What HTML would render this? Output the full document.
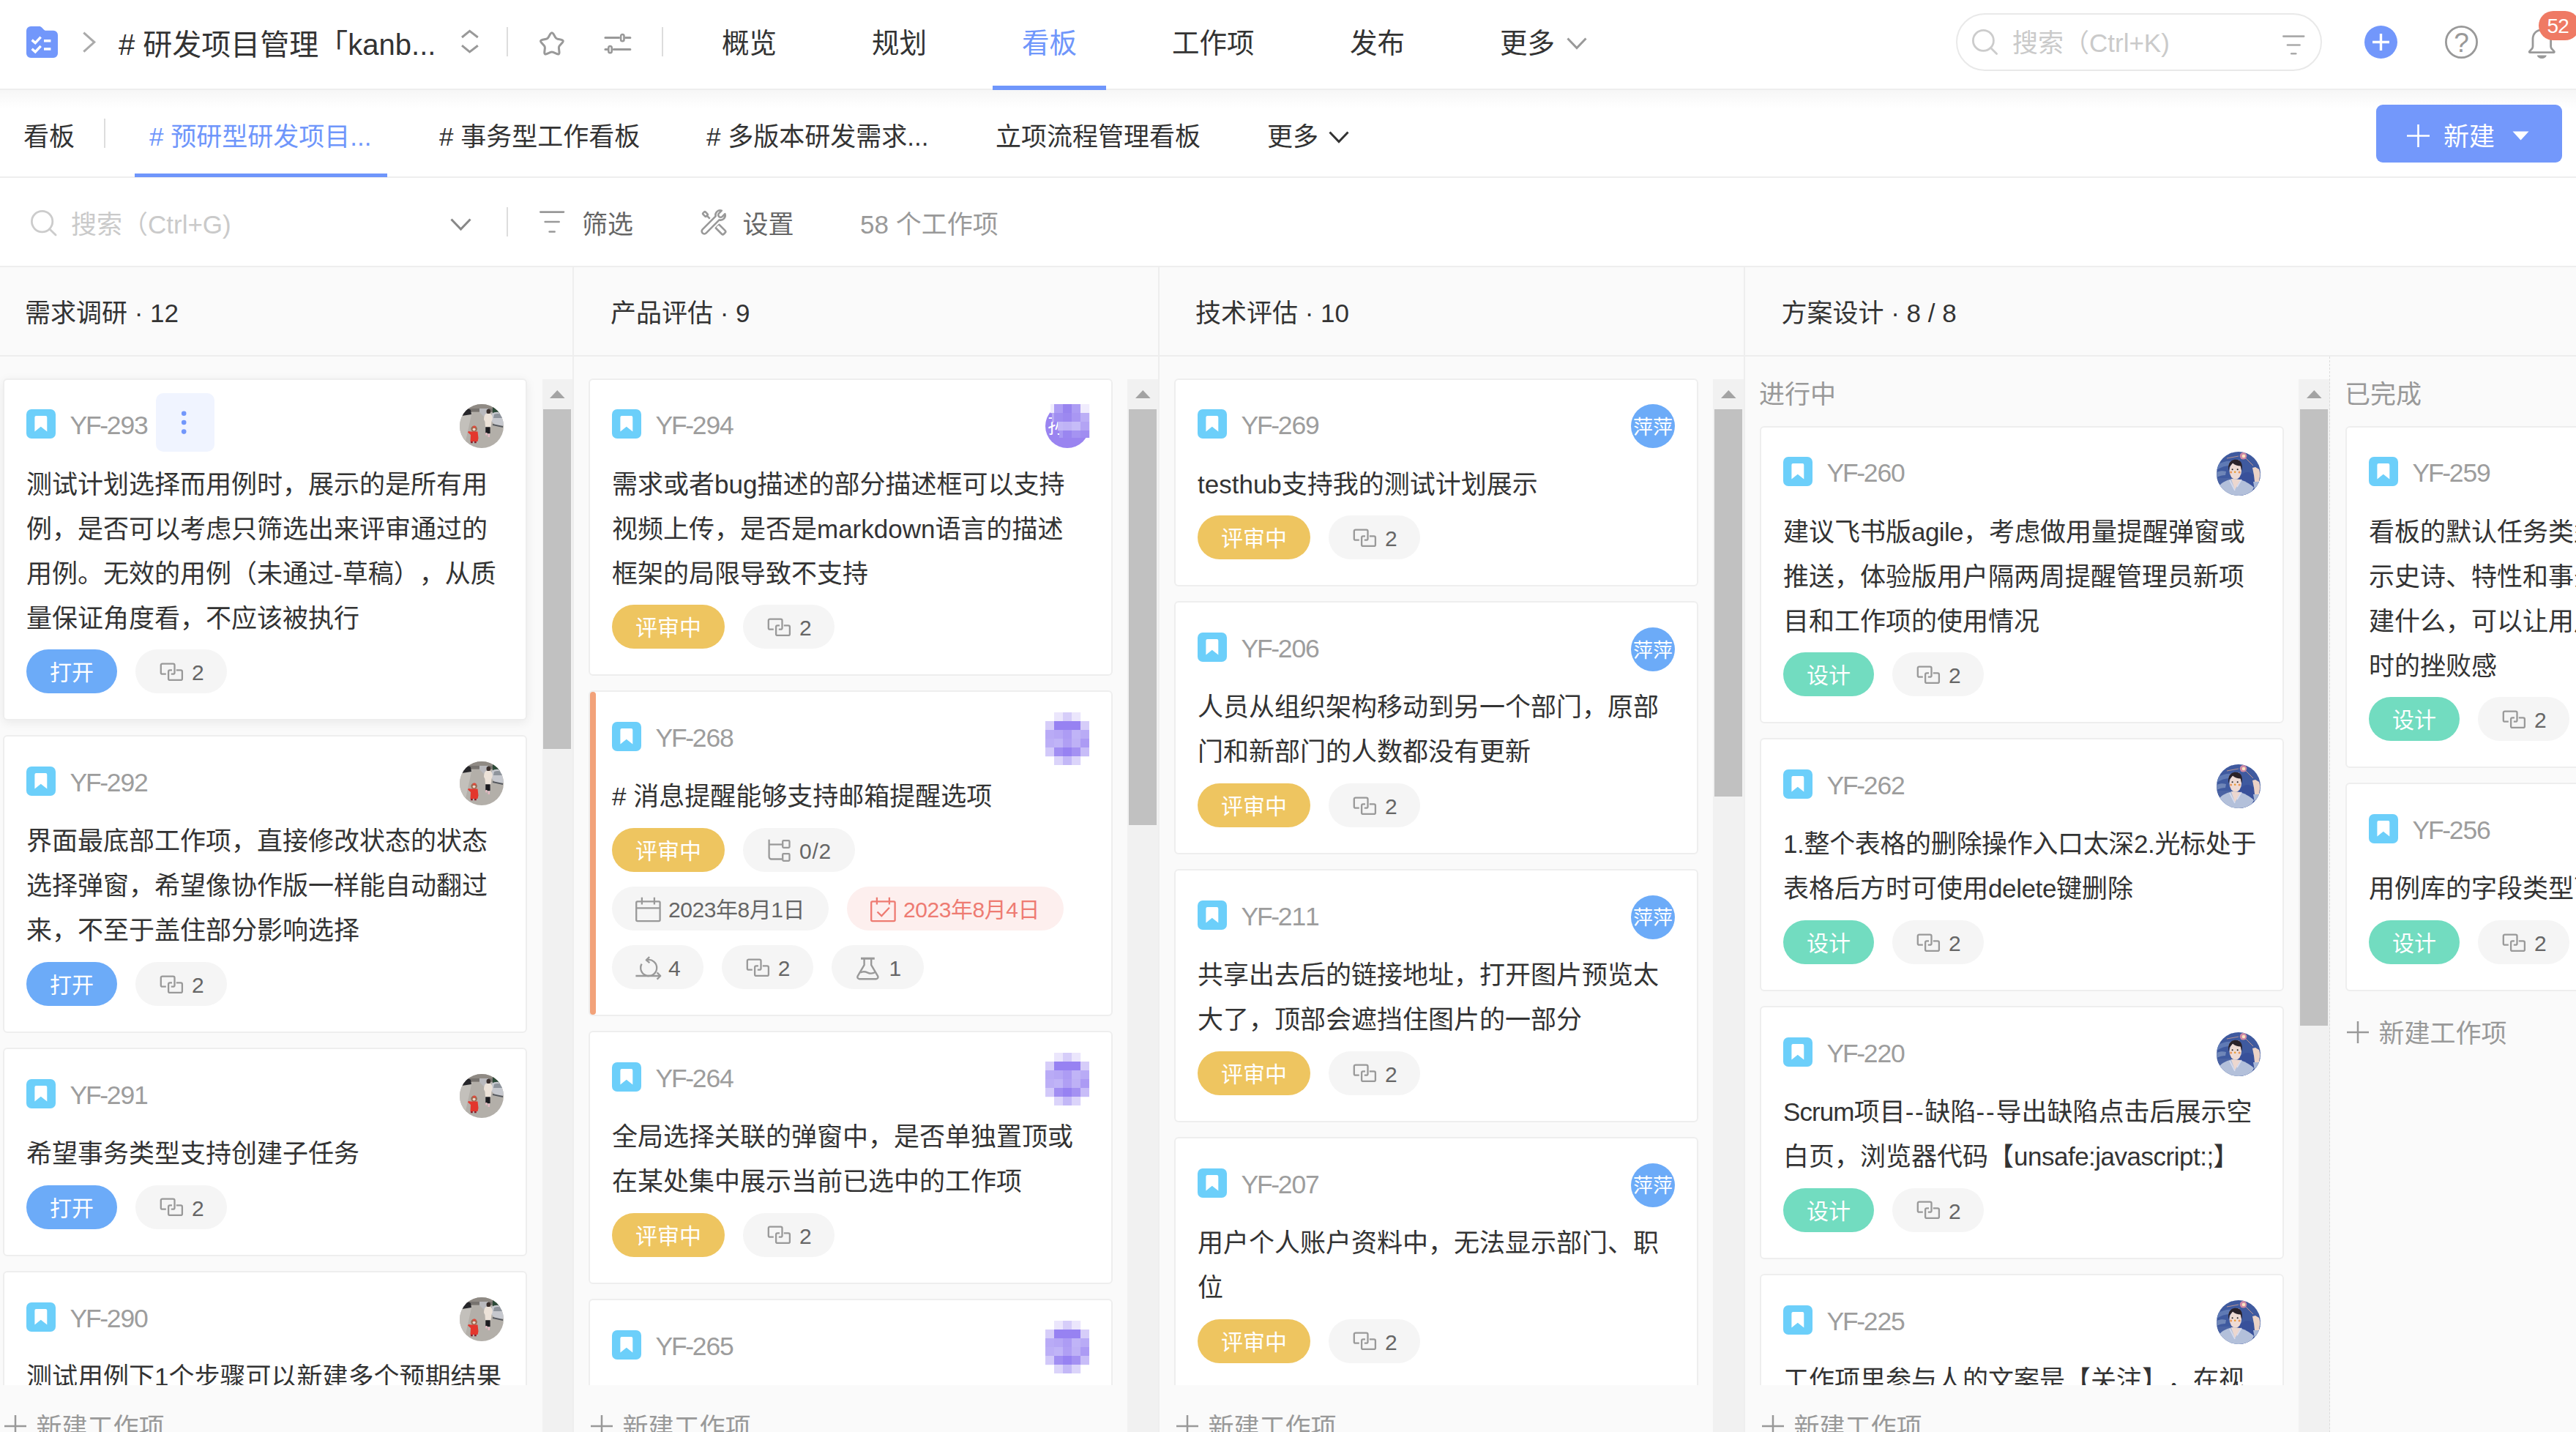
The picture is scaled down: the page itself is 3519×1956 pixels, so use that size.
<!DOCTYPE html>
<html lang="zh-CN"><head><meta charset="utf-8"><title>看板</title>
<style>
*{box-sizing:border-box;margin:0;padding:0}
html,body{background:#fff}
body{width:3519px;height:1956px}
#root{position:relative;width:3519px;height:1956px;overflow:hidden;background:#fff;text-spacing-trim:space-all;font-kerning:none;font-family:"Liberation Sans","Noto Sans CJK SC",sans-serif;color:#333;-webkit-font-smoothing:antialiased}
.pill{position:absolute;height:60px;border-radius:30px;font-size:30px;line-height:60px;white-space:nowrap}
.pill .t{position:absolute;top:2px;line-height:60px}
.st{color:#fff;text-align:center}
.card{position:absolute;background:#fff;border:2px solid #eeeeee;border-radius:6px}
.ct{position:absolute;font-size:35px;line-height:61px;color:#333;white-space:nowrap}
.id{position:absolute;font-size:35.5px;line-height:50px;color:#9d9d9d;letter-spacing:-1.1px;white-space:nowrap}
</style></head>
<body>
<div id="root">
<!-- top navigation -->
<div style="position:absolute;left:0px;top:0px;width:3519px;height:122px;background:#fff;"></div>
<div style="position:absolute;left:0px;top:122px;width:3519px;height:26px;background:linear-gradient(#f6f6f6,#ffffff);"></div>
<div style="position:absolute;left:0px;top:121px;width:3519px;height:1.5px;background:#eeeeee;"></div>
<svg style="position:absolute;left:35.7px;top:35.7px;" width="43" height="43" viewBox="0 0 43 43" fill="none"><path d="M6 0h11.5c1.6 0 2.6.5 3.8 1.7l2.6 2.7c.9.9 1.6 1.4 3 1.4H37a6 6 0 0 1 6 6V37a6 6 0 0 1-6 6H6a6 6 0 0 1-6-6V6a6 6 0 0 1 6-6z" fill="#7297fb"/><path d="M7.6 18.6l4.6 4 7.5-8M7.6 30.8l4.6 4 7.5-8" stroke="#fff" stroke-width="3.4"/><rect x="24" y="18" width="9.4" height="3.5" fill="#fff"/><rect x="24" y="29.2" width="9.4" height="3.5" fill="#fff"/></svg>
<svg style="position:absolute;left:112px;top:43px;" width="20" height="30" viewBox="0 0 20 30" fill="none"><path d="M2.3 1.6L16.8 14.6 2.3 27.7" stroke="#aaa" stroke-width="3"/></svg>
<div class="ttl" style="position:absolute;left:162px;top:28.6px;font-size:40px;line-height:64.0px;color:#333;white-space:nowrap;letter-spacing:0px;"># 研发项目管理「kanb...</div>
<svg style="position:absolute;left:629px;top:40px;" width="26" height="34" viewBox="0 0 26 34" fill="none"><path d="M2 11L12.6 2.4 23.8 11M2 22.2L12.6 30.9 23.8 22.2" stroke="#999" stroke-width="3"/></svg>
<div style="position:absolute;left:692px;top:37px;width:2px;height:40px;background:#dddddd;"></div>
<svg style="position:absolute;left:735px;top:42px;overflow:visible;" width="38" height="36" viewBox="0 0 38 36" fill="none"><path d="M16.67 4.61Q18.90 0.70 21.13 4.61L23.67 9.04Q24.66 10.77 26.62 11.18L31.61 12.22Q36.02 13.14 32.99 16.47L29.56 20.25Q28.22 21.73 28.44 23.72L28.99 28.79Q29.48 33.26 25.38 31.42L20.72 29.32Q18.90 28.50 17.08 29.32L12.42 31.42Q8.32 33.26 8.81 28.79L9.36 23.72Q9.58 21.73 8.24 20.25L4.81 16.47Q1.78 13.14 6.19 12.22L11.18 11.18Q13.14 10.77 14.13 9.04Z" stroke="#999" stroke-width="3" stroke-linejoin="round"/></svg>
<svg style="position:absolute;left:824px;top:44px;overflow:visible;" width="38" height="31" viewBox="0 0 38 31" fill="none"><g stroke="#999" stroke-width="3" stroke-linecap="round"><path d="M2.9 7.4H21.6M30.6 7.4h6.3M2.9 23.6h2.6M14.2 23.6h22.7"/><rect x="24.1" y="3" width="4.400" height="9.200" rx="2.2" stroke-width="2.600"/><rect x="7.300" y="19" width="4.400" height="9.200" rx="2.2" stroke-width="2.600"/></g></svg>
<div style="position:absolute;left:904px;top:37px;width:2px;height:40px;background:#dddddd;"></div>
<div style="position:absolute;left:986px;top:29.1px;font-size:37.5px;line-height:60.0px;color:#333;white-space:nowrap;">概览</div>
<div style="position:absolute;left:1191px;top:29.1px;font-size:37.5px;line-height:60.0px;color:#333;white-space:nowrap;">规划</div>
<div style="position:absolute;left:1396px;top:29.1px;font-size:37.5px;line-height:60.0px;color:#6f96fb;white-space:nowrap;">看板</div>
<div style="position:absolute;left:1601px;top:29.1px;font-size:37.5px;line-height:60.0px;color:#333;white-space:nowrap;">工作项</div>
<div style="position:absolute;left:1844px;top:29.1px;font-size:37.5px;line-height:60.0px;color:#333;white-space:nowrap;">发布</div>
<div style="position:absolute;left:2049px;top:29.1px;font-size:37.5px;line-height:60.0px;color:#333;white-space:nowrap;">更多</div>
<div style="position:absolute;left:1356px;top:117px;width:155px;height:5.5px;background:#6f96fb;"></div>
<svg style="position:absolute;left:2140px;top:51px;overflow:visible;" width="28" height="16" viewBox="0 0 28 16" fill="none"><path d="M1.5 1.5L14.0 14.5L26.5 1.5" stroke="#999" stroke-width="3" stroke-linejoin="miter"/></svg>
<div style="position:absolute;left:2672px;top:18px;width:500px;height:79px;border:2px solid #e9e9e9;border-radius:40px;background:#fff;"></div>
<svg style="position:absolute;left:2694px;top:40px;overflow:visible;" width="35" height="35" viewBox="0 0 35 35" fill="none"><circle cx="15.40" cy="15.40" r="14.00" stroke="#ccc" stroke-width="2.8"/><path d="M25.30 25.30L33.60 33.60" stroke="#ccc" stroke-width="2.8" stroke-linecap="round"/></svg>
<div class="ph" style="position:absolute;left:2749px;top:31.0px;font-size:35px;line-height:56.0px;color:#cacaca;white-space:nowrap;">搜索（Ctrl+K)</div>
<svg style="position:absolute;left:3117.5px;top:47.1px;overflow:visible;" width="30.5" height="28.9" viewBox="0 0 30.5 28.9" fill="none"><g stroke="#aaa" stroke-width="2.6" stroke-linecap="round"><path d="M1.3 2.6H29.2"/><path d="M6.94 14.45H23.56"/><path d="M12.28 26.3H18.22"/></g></svg>
<div style="position:absolute;left:3230px;top:35px;width:45px;height:45px;background:#7297fb;border-radius:50%;"></div>
<svg style="position:absolute;left:3241px;top:46px;overflow:visible;" width="23" height="23" viewBox="0 0 23 23" fill="none"><path d="M11.5 0V23M0 11.5H23" stroke="#fff" stroke-width="3.4"/></svg>
<svg style="position:absolute;left:3340px;top:35px;" width="45" height="45" viewBox="0 0 45 45" fill="none"><circle cx="22.500" cy="22.500" r="21.100" stroke="#999" stroke-width="2.800"/><text x="22.6" y="36" text-anchor="middle" font-size="37" fill="#999" font-family="Liberation Sans, sans-serif">?</text></svg>
<svg style="position:absolute;left:3453px;top:39px;overflow:visible;" width="39" height="42" viewBox="0 0 39 42" fill="none"><path d="M19.300 1.800c-7.400 0-12.300 5.400-12.300 12.600v10.200c0 1.300-.5 2.300-1.500 3.300l-3 3.200c-.6.700-.2 1.600.7 1.600h32.200c.9 0 1.300-.9.7-1.600l-3-3.200c-1-1-1.500-2-1.500-3.300V14.400c0-7.200-4.900-12.600-12.300-12.600z" stroke="#999" stroke-width="2.800" stroke-linejoin="round"/><path d="M12.800 36.500h13c-.6 2.800-3.100 4.500-6.500 4.500s-5.900-1.700-6.500-4.500z" fill="#999"/></svg>
<div style="position:absolute;left:3468px;top:15px;width:56px;height:40px;background:#ef7a64;border-radius:20px;"></div>
<div style="position:absolute;left:3479.5px;top:14.4px;font-size:28px;line-height:44.8px;color:#fff;white-space:nowrap;letter-spacing:-0.8px;">52</div>
<!-- board tabs -->
<div style="position:absolute;left:32px;top:159.0px;font-size:35px;line-height:56.0px;color:#333;white-space:nowrap;">看板</div>
<div style="position:absolute;left:141.9px;top:162px;width:2.1px;height:40px;background:#dddddd;"></div>
<div style="position:absolute;left:204px;top:159.0px;font-size:35px;line-height:56.0px;color:#6f96fb;white-space:nowrap;"># 预研型研发项目...</div>
<div style="position:absolute;left:600px;top:159.0px;font-size:35px;line-height:56.0px;color:#333;white-space:nowrap;"># 事务型工作看板</div>
<div style="position:absolute;left:965px;top:159.0px;font-size:35px;line-height:56.0px;color:#333;white-space:nowrap;"># 多版本研发需求...</div>
<div style="position:absolute;left:1360px;top:159.0px;font-size:35px;line-height:56.0px;color:#333;white-space:nowrap;">立项流程管理看板</div>
<div style="position:absolute;left:1731px;top:159.0px;font-size:35px;line-height:56.0px;color:#333;white-space:nowrap;">更多</div>
<svg style="position:absolute;left:1815px;top:178.8px;overflow:visible;" width="28" height="16" viewBox="0 0 28 16" fill="none"><path d="M1.5 1.5L14.0 14.5L26.5 1.5" stroke="#333" stroke-width="3" stroke-linejoin="miter"/></svg>
<div style="position:absolute;left:0px;top:241px;width:3519px;height:1.8px;background:#eeeeee;"></div>
<div style="position:absolute;left:184px;top:236.8px;width:345px;height:5.2px;background:#6f96fb;"></div>
<div style="position:absolute;left:3246px;top:143px;width:254px;height:79px;background:#7398fb;border-radius:9px;"></div>
<svg style="position:absolute;left:3288px;top:169.7px;overflow:visible;" width="31" height="31" viewBox="0 0 31 31" fill="none"><path d="M15.5 0V31M0 15.5H31" stroke="#fff" stroke-width="2.6"/></svg>
<div style="position:absolute;left:3338px;top:158.5px;font-size:35px;line-height:56.0px;color:#fff;white-space:nowrap;">新建</div>
<svg style="position:absolute;left:3432px;top:179px;" width="23" height="13" viewBox="0 0 23 13" fill="none"><path d="M0.500 0.500h22L11.500 12.500z" fill="#fff"/></svg>
<!-- toolbar -->
<svg style="position:absolute;left:41.5px;top:287px;overflow:visible;" width="35.5" height="35.5" viewBox="0 0 35.5 35.5" fill="none"><circle cx="15.60" cy="15.60" r="14.20" stroke="#ccc" stroke-width="2.8"/><path d="M25.64 25.64L34.10 34.10" stroke="#ccc" stroke-width="2.8" stroke-linecap="round"/></svg>
<div class="ph" style="position:absolute;left:97px;top:278.5px;font-size:35px;line-height:56.0px;color:#cacaca;white-space:nowrap;">搜索（Ctrl+G)</div>
<svg style="position:absolute;left:615px;top:298px;overflow:visible;" width="29" height="16.5" viewBox="0 0 29 16.5" fill="none"><path d="M1.5 1.5L14.5 15.0L27.5 1.5" stroke="#888" stroke-width="3" stroke-linejoin="miter"/></svg>
<div style="position:absolute;left:692px;top:283px;width:2.1px;height:40px;background:#dddddd;"></div>
<svg style="position:absolute;left:737px;top:286.9px;overflow:visible;" width="34.3" height="32.1" viewBox="0 0 34.3 32.1" fill="none"><g stroke="#999" stroke-width="2.6" stroke-linecap="round"><path d="M1.3 2.6H33.0"/><path d="M7.65 16.05H26.65"/><path d="M13.65 29.5H20.65"/></g></svg>
<div style="position:absolute;left:795px;top:278.5px;font-size:35px;line-height:56.0px;color:#666;white-space:nowrap;">筛选</div>
<svg style="position:absolute;left:956.5px;top:285.5px;overflow:visible;" width="35" height="35" viewBox="0 0 35 35" fill="none"><g stroke="#999" stroke-width="2.600" stroke-linejoin="round" stroke-linecap="round" fill="#fff"><g transform="rotate(-45 17.5 17.5)"><rect x="15.2" y="-1.200" width="4.600" height="6.200" rx="1"/><path d="M17.5 5V24"/><rect x="14.200" y="24" width="6.600" height="15" rx="2.200"/></g><g transform="rotate(45 17.5 17.5)"><path d="M14.300 -1.700v5.200a3.200 3.200 0 0 0 6.400 0v-5.200a6.400 6.400 0 0 1 .300 11.300V35a3.300 3.300 0 0 1-7 0V9.600a6.400 6.400 0 0 1 .300-11.300z" stroke="#fff" stroke-width="6.500"/><path d="M14.300 -1.700v5.200a3.200 3.200 0 0 0 6.400 0v-5.200a6.400 6.400 0 0 1 .300 11.300V35a3.300 3.300 0 0 1-7 0V9.600a6.400 6.400 0 0 1 .300-11.300z"/></g></g></svg>
<div style="position:absolute;left:1014.5px;top:278.5px;font-size:35px;line-height:56.0px;color:#666;white-space:nowrap;">设置</div>
<div style="position:absolute;left:1175px;top:278.5px;font-size:35px;line-height:56.0px;color:#999;white-space:nowrap;">58 个工作项</div>
<!-- board -->
<div style="position:absolute;left:0px;top:363px;width:3519px;height:1.5px;background:#eeeeee;"></div>
<div style="position:absolute;left:0px;top:364.5px;width:3519px;height:1600px;background:#fafafa;"></div>
<div style="position:absolute;left:34px;top:400.0px;font-size:35px;line-height:56.0px;color:#333;white-space:nowrap;">需求调研 · 12</div>
<div style="position:absolute;left:834px;top:400.0px;font-size:35px;line-height:56.0px;color:#333;white-space:nowrap;">产品评估 · 9</div>
<div style="position:absolute;left:1633px;top:400.0px;font-size:35px;line-height:56.0px;color:#333;white-space:nowrap;">技术评估 · 10</div>
<div style="position:absolute;left:2433.5px;top:400.0px;font-size:35px;line-height:56.0px;color:#333;white-space:nowrap;">方案设计 · 8 / 8</div>
<div style="position:absolute;left:0px;top:485px;width:3519px;height:1.5px;background:#eeeeee;"></div>
<div style="position:absolute;left:-15.7px;top:496.5px;width:755.5px;height:507.6px;overflow:hidden;"><div class="card" style="left:20px;top:20px;width:715.5px;height:467.6px;box-shadow:0 3px 14px rgba(0,0,0,.07);">
<div style="position:absolute;left:-1.3px;top:-0.3px;width:715.5px;height:467.6px;">
<svg style="position:absolute;left:31px;top:41px;" width="40" height="40" viewBox="0 0 40 40" fill="none"><rect width="40" height="40" rx="7" fill="#6ccffa"/><path d="M11.4 11a2 2 0 0 1 2-2h12.9a2 2 0 0 1 2 2v19.5L19.8 23.8 11.4 30.5z" fill="#fff"/></svg>
<div class="id" style="left:90.5px;top:38.2px"><span style="letter-spacing:-2.3px">YF-</span>293</div>
<div style="position:absolute;left:208px;top:18.6px;width:80px;height:80px;background:#f0f4ff;border-radius:10px;"></div>
<svg style="position:absolute;left:208px;top:18.6px;" width="80" height="80" viewBox="0 0 80 80" fill="none"><g fill="#7297fb"><circle cx="38.200" cy="27.700" r="3.300"/><circle cx="38.200" cy="40" r="3.300"/><circle cx="38.200" cy="52.600" r="3.300"/></g></svg>
<svg style="position:absolute;left:623px;top:34px;" width="60" height="60" viewBox="0 0 60 60" fill="none"><defs><clipPath id="cp"><circle cx="30" cy="30" r="30"/></clipPath></defs><g clip-path="url(#cp)"><rect width="60" height="60" fill="#b3afa9"/><path d="M0 14L17 10 6 60H0z" fill="#c3c0bb"/><rect width="60" height="11" fill="#8f8a84"/><path d="M0 6h60v6L38 10 17 10 0 16z" fill="#77736f"/><path d="M3 9c3-3 9-3 12-1l1 6L3 16z" fill="#26262a"/><path d="M27 6h12v10l-6 1-6-6z" fill="#b9b9bd"/><path d="M45 2l10 6v6H45z" fill="#2c4a38"/><path d="M44 13c4-3 10-3 14 0l4 8v8l-12 1-7-7z" fill="#c6c8ce"/><path d="M47 14c3-1.500 7-1.500 10 0l2 5H46z" fill="#8e949c"/><path d="M45 27l14 3v2l-14-3z" fill="#55585e"/><ellipse cx="39.300" cy="10" rx="2.800" ry="3.200" fill="#3a2f2c"/><path d="M36 13c-2 1-3 4-3 8l1.500 3 .500 7.500h7.500l1-8 1.300-3c0-4-1-6.500-3-7.500z" fill="#ece2d8"/><rect x="35.300" y="31.300" width="6.300" height="8.700" fill="#1c1c20"/><path d="M35.300 39h2.200v3.500h-2.200zM38.600 41h2.400v4h-2.400z" fill="#e6b9c3"/><ellipse cx="19.600" cy="33.800" rx="4.300" ry="4" fill="#9b6b52"/><path d="M17.500 30.500c1.500-1.500 3.500-1.500 5 0l-1 2h-3z" fill="#e04a3c"/><ellipse cx="19.600" cy="34.600" rx="2" ry="1.800" fill="#edd5c8"/><path d="M15 37.500h9.500l1 9-1 4.500h-10l.5-9-4-3.500 1-1.500z" fill="#e3362d"/><path d="M15 51h2.800v2.300H15zM20 51h2.800v2.300H20z" fill="#8a1f2c"/></g></svg>
<div class="ct" style="left:31px;top:112.3px">测试计划选择而用例时，展示的是所有用<br>例，是否可以考虑只筛选出来评审通过的<br>用例。无效的用例（未通过-草稿），从质<br>量保证角度看，不应该被执行</div>
<div class="pill st" style="left:31px;top:369.0px;width:124.4px;background:#6cabf8;"><span class="t" style="left:32px">打开</span></div>
<div class="pill" style="left:180.0px;top:369.0px;width:125px;background:#f5f5f5;color:#666;"><svg style="position:absolute;left:32px;top:12.5px;overflow:visible;" width="35" height="35" viewBox="0 0 35 35" fill="none"><g stroke="#999" stroke-width="2.3" stroke-linecap="butt"><path d="M9.8 20.7H4.8a2 2 0 0 1-2-2V8.6a2 2 0 0 1 2-2h14.7a2 2 0 0 1 2 2v10.1a2 2 0 0 1-2 2h-2.7" /><path d="M18 15.4h-2.9a2 2 0 0 0-2 2v9.5a2 2 0 0 0 2 2h14.8a2 2 0 0 0 2-2v-9.5a2 2 0 0 0-2-2h-6.1" /></g></svg><span class="t" style="left:77px;">2</span></div>
</div></div></div>
<div style="position:absolute;left:-15.7px;top:984.3px;width:755.5px;height:446.6px;overflow:hidden;"><div class="card" style="left:20px;top:20px;width:715.5px;height:406.6px;">
<div style="position:absolute;left:-1.3px;top:-0.3px;width:715.5px;height:406.6px;">
<svg style="position:absolute;left:31px;top:41px;" width="40" height="40" viewBox="0 0 40 40" fill="none"><rect width="40" height="40" rx="7" fill="#6ccffa"/><path d="M11.4 11a2 2 0 0 1 2-2h12.9a2 2 0 0 1 2 2v19.5L19.8 23.8 11.4 30.5z" fill="#fff"/></svg>
<div class="id" style="left:90.5px;top:38.2px"><span style="letter-spacing:-2.3px">YF-</span>292</div>
<svg style="position:absolute;left:623px;top:34px;" width="60" height="60" viewBox="0 0 60 60" fill="none"><defs><clipPath id="cp"><circle cx="30" cy="30" r="30"/></clipPath></defs><g clip-path="url(#cp)"><rect width="60" height="60" fill="#b3afa9"/><path d="M0 14L17 10 6 60H0z" fill="#c3c0bb"/><rect width="60" height="11" fill="#8f8a84"/><path d="M0 6h60v6L38 10 17 10 0 16z" fill="#77736f"/><path d="M3 9c3-3 9-3 12-1l1 6L3 16z" fill="#26262a"/><path d="M27 6h12v10l-6 1-6-6z" fill="#b9b9bd"/><path d="M45 2l10 6v6H45z" fill="#2c4a38"/><path d="M44 13c4-3 10-3 14 0l4 8v8l-12 1-7-7z" fill="#c6c8ce"/><path d="M47 14c3-1.500 7-1.500 10 0l2 5H46z" fill="#8e949c"/><path d="M45 27l14 3v2l-14-3z" fill="#55585e"/><ellipse cx="39.300" cy="10" rx="2.800" ry="3.200" fill="#3a2f2c"/><path d="M36 13c-2 1-3 4-3 8l1.500 3 .500 7.500h7.500l1-8 1.300-3c0-4-1-6.500-3-7.500z" fill="#ece2d8"/><rect x="35.300" y="31.300" width="6.300" height="8.700" fill="#1c1c20"/><path d="M35.300 39h2.200v3.500h-2.200zM38.600 41h2.400v4h-2.400z" fill="#e6b9c3"/><ellipse cx="19.600" cy="33.800" rx="4.300" ry="4" fill="#9b6b52"/><path d="M17.500 30.500c1.500-1.500 3.500-1.500 5 0l-1 2h-3z" fill="#e04a3c"/><ellipse cx="19.600" cy="34.600" rx="2" ry="1.800" fill="#edd5c8"/><path d="M15 37.500h9.500l1 9-1 4.500h-10l.5-9-4-3.500 1-1.500z" fill="#e3362d"/><path d="M15 51h2.800v2.300H15zM20 51h2.800v2.300H20z" fill="#8a1f2c"/></g></svg>
<div class="ct" style="left:31px;top:112.3px">界面最底部工作项，直接修改状态的状态<br>选择弹窗，希望像协作版一样能自动翻过<br>来，不至于盖住部分影响选择</div>
<div class="pill st" style="left:31px;top:308.0px;width:124.4px;background:#6cabf8;"><span class="t" style="left:32px">打开</span></div>
<div class="pill" style="left:180.0px;top:308.0px;width:125px;background:#f5f5f5;color:#666;"><svg style="position:absolute;left:32px;top:12.5px;overflow:visible;" width="35" height="35" viewBox="0 0 35 35" fill="none"><g stroke="#999" stroke-width="2.3" stroke-linecap="butt"><path d="M9.8 20.7H4.8a2 2 0 0 1-2-2V8.6a2 2 0 0 1 2-2h14.7a2 2 0 0 1 2 2v10.1a2 2 0 0 1-2 2h-2.7" /><path d="M18 15.4h-2.9a2 2 0 0 0-2 2v9.5a2 2 0 0 0 2 2h14.8a2 2 0 0 0 2-2v-9.5a2 2 0 0 0-2-2h-6.1" /></g></svg><span class="t" style="left:77px;">2</span></div>
</div></div></div>
<div style="position:absolute;left:-15.7px;top:1411.1px;width:755.5px;height:324.6px;overflow:hidden;"><div class="card" style="left:20px;top:20px;width:715.5px;height:284.6px;">
<div style="position:absolute;left:-1.3px;top:-0.3px;width:715.5px;height:284.6px;">
<svg style="position:absolute;left:31px;top:41px;" width="40" height="40" viewBox="0 0 40 40" fill="none"><rect width="40" height="40" rx="7" fill="#6ccffa"/><path d="M11.4 11a2 2 0 0 1 2-2h12.9a2 2 0 0 1 2 2v19.5L19.8 23.8 11.4 30.5z" fill="#fff"/></svg>
<div class="id" style="left:90.5px;top:38.2px"><span style="letter-spacing:-2.3px">YF-</span>291</div>
<svg style="position:absolute;left:623px;top:34px;" width="60" height="60" viewBox="0 0 60 60" fill="none"><defs><clipPath id="cp"><circle cx="30" cy="30" r="30"/></clipPath></defs><g clip-path="url(#cp)"><rect width="60" height="60" fill="#b3afa9"/><path d="M0 14L17 10 6 60H0z" fill="#c3c0bb"/><rect width="60" height="11" fill="#8f8a84"/><path d="M0 6h60v6L38 10 17 10 0 16z" fill="#77736f"/><path d="M3 9c3-3 9-3 12-1l1 6L3 16z" fill="#26262a"/><path d="M27 6h12v10l-6 1-6-6z" fill="#b9b9bd"/><path d="M45 2l10 6v6H45z" fill="#2c4a38"/><path d="M44 13c4-3 10-3 14 0l4 8v8l-12 1-7-7z" fill="#c6c8ce"/><path d="M47 14c3-1.500 7-1.500 10 0l2 5H46z" fill="#8e949c"/><path d="M45 27l14 3v2l-14-3z" fill="#55585e"/><ellipse cx="39.300" cy="10" rx="2.800" ry="3.200" fill="#3a2f2c"/><path d="M36 13c-2 1-3 4-3 8l1.500 3 .500 7.500h7.500l1-8 1.300-3c0-4-1-6.500-3-7.500z" fill="#ece2d8"/><rect x="35.300" y="31.300" width="6.300" height="8.700" fill="#1c1c20"/><path d="M35.300 39h2.200v3.500h-2.200zM38.600 41h2.400v4h-2.400z" fill="#e6b9c3"/><ellipse cx="19.600" cy="33.800" rx="4.300" ry="4" fill="#9b6b52"/><path d="M17.500 30.500c1.500-1.500 3.500-1.500 5 0l-1 2h-3z" fill="#e04a3c"/><ellipse cx="19.600" cy="34.600" rx="2" ry="1.800" fill="#edd5c8"/><path d="M15 37.500h9.500l1 9-1 4.500h-10l.5-9-4-3.500 1-1.500z" fill="#e3362d"/><path d="M15 51h2.800v2.300H15zM20 51h2.800v2.300H20z" fill="#8a1f2c"/></g></svg>
<div class="ct" style="left:31px;top:112.3px">希望事务类型支持创建子任务</div>
<div class="pill st" style="left:31px;top:186.0px;width:124.4px;background:#6cabf8;"><span class="t" style="left:32px">打开</span></div>
<div class="pill" style="left:180.0px;top:186.0px;width:125px;background:#f5f5f5;color:#666;"><svg style="position:absolute;left:32px;top:12.5px;overflow:visible;" width="35" height="35" viewBox="0 0 35 35" fill="none"><g stroke="#999" stroke-width="2.3" stroke-linecap="butt"><path d="M9.8 20.7H4.8a2 2 0 0 1-2-2V8.6a2 2 0 0 1 2-2h14.7a2 2 0 0 1 2 2v10.1a2 2 0 0 1-2 2h-2.7" /><path d="M18 15.4h-2.9a2 2 0 0 0-2 2v9.5a2 2 0 0 0 2 2h14.8a2 2 0 0 0 2-2v-9.5a2 2 0 0 0-2-2h-6.1" /></g></svg><span class="t" style="left:77px;">2</span></div>
</div></div></div>
<div style="position:absolute;left:-15.7px;top:1715.8999999999999px;width:755.5px;height:176.1px;overflow:hidden;"><div class="card" style="left:20px;top:20px;width:715.5px;height:345.6px;">
<div style="position:absolute;left:-1.3px;top:-0.3px;width:715.5px;height:345.6px;">
<svg style="position:absolute;left:31px;top:41px;" width="40" height="40" viewBox="0 0 40 40" fill="none"><rect width="40" height="40" rx="7" fill="#6ccffa"/><path d="M11.4 11a2 2 0 0 1 2-2h12.9a2 2 0 0 1 2 2v19.5L19.8 23.8 11.4 30.5z" fill="#fff"/></svg>
<div class="id" style="left:90.5px;top:38.2px"><span style="letter-spacing:-2.3px">YF-</span>290</div>
<svg style="position:absolute;left:623px;top:34px;" width="60" height="60" viewBox="0 0 60 60" fill="none"><defs><clipPath id="cp"><circle cx="30" cy="30" r="30"/></clipPath></defs><g clip-path="url(#cp)"><rect width="60" height="60" fill="#b3afa9"/><path d="M0 14L17 10 6 60H0z" fill="#c3c0bb"/><rect width="60" height="11" fill="#8f8a84"/><path d="M0 6h60v6L38 10 17 10 0 16z" fill="#77736f"/><path d="M3 9c3-3 9-3 12-1l1 6L3 16z" fill="#26262a"/><path d="M27 6h12v10l-6 1-6-6z" fill="#b9b9bd"/><path d="M45 2l10 6v6H45z" fill="#2c4a38"/><path d="M44 13c4-3 10-3 14 0l4 8v8l-12 1-7-7z" fill="#c6c8ce"/><path d="M47 14c3-1.500 7-1.500 10 0l2 5H46z" fill="#8e949c"/><path d="M45 27l14 3v2l-14-3z" fill="#55585e"/><ellipse cx="39.300" cy="10" rx="2.800" ry="3.200" fill="#3a2f2c"/><path d="M36 13c-2 1-3 4-3 8l1.500 3 .500 7.500h7.500l1-8 1.300-3c0-4-1-6.500-3-7.500z" fill="#ece2d8"/><rect x="35.300" y="31.300" width="6.300" height="8.700" fill="#1c1c20"/><path d="M35.300 39h2.200v3.500h-2.200zM38.600 41h2.400v4h-2.400z" fill="#e6b9c3"/><ellipse cx="19.600" cy="33.800" rx="4.300" ry="4" fill="#9b6b52"/><path d="M17.500 30.500c1.500-1.500 3.500-1.500 5 0l-1 2h-3z" fill="#e04a3c"/><ellipse cx="19.600" cy="34.600" rx="2" ry="1.800" fill="#edd5c8"/><path d="M15 37.500h9.500l1 9-1 4.500h-10l.5-9-4-3.500 1-1.500z" fill="#e3362d"/><path d="M15 51h2.800v2.300H15zM20 51h2.800v2.300H20z" fill="#8a1f2c"/></g></svg>
<div class="ct" style="left:31px;top:112.3px">测试用例下1个步骤可以新建多个预期结果<br>的情况，但是执行用例时只能整体标记</div>
<div class="pill st" style="left:31px;top:247.0px;width:124.4px;background:#6cabf8;"><span class="t" style="left:32px">打开</span></div>
<div class="pill" style="left:180.0px;top:247.0px;width:125px;background:#f5f5f5;color:#666;"><svg style="position:absolute;left:32px;top:12.5px;overflow:visible;" width="35" height="35" viewBox="0 0 35 35" fill="none"><g stroke="#999" stroke-width="2.3" stroke-linecap="butt"><path d="M9.8 20.7H4.8a2 2 0 0 1-2-2V8.6a2 2 0 0 1 2-2h14.7a2 2 0 0 1 2 2v10.1a2 2 0 0 1-2 2h-2.7" /><path d="M18 15.4h-2.9a2 2 0 0 0-2 2v9.5a2 2 0 0 0 2 2h14.8a2 2 0 0 0 2-2v-9.5a2 2 0 0 0-2-2h-6.1" /></g></svg><span class="t" style="left:77px;">2</span></div>
</div></div></div>
<div style="position:absolute;left:784.3px;top:496.5px;width:755.5px;height:446.6px;overflow:hidden;"><div class="card" style="left:20px;top:20px;width:715.5px;height:406.6px;">
<div style="position:absolute;left:-1.3px;top:-0.3px;width:715.5px;height:406.6px;">
<svg style="position:absolute;left:31px;top:41px;" width="40" height="40" viewBox="0 0 40 40" fill="none"><rect width="40" height="40" rx="7" fill="#6ccffa"/><path d="M11.4 11a2 2 0 0 1 2-2h12.9a2 2 0 0 1 2 2v19.5L19.8 23.8 11.4 30.5z" fill="#fff"/></svg>
<div class="id" style="left:90.5px;top:38.2px"><span style="letter-spacing:-2.3px">YF-</span>294</div>
<svg style="position:absolute;left:623px;top:34px;overflow:visible;" width="60" height="60" viewBox="0 0 60 60" fill="none"><circle cx="30" cy="30" r="30" fill="#9a84f0"/><text x="3" y="39.5" font-size="27" fill="#fff" font-family="Liberation Sans, Noto Sans CJK SC, sans-serif">孙</text><rect x="7" y="0" width="5.2" height="12.2" fill="#efecfd"/><rect x="12" y="0" width="12.2" height="12.2" fill="#ad9df4"/><rect x="24" y="0" width="12.2" height="12.2" fill="#9884ef"/><rect x="36" y="0" width="12.2" height="12.2" fill="#ad9df4"/><rect x="48" y="0" width="12.2" height="12.2" fill="#f0ecfd"/><rect x="9" y="12" width="3.2" height="12.2" fill="#b8aaf5"/><rect x="12" y="12" width="12.2" height="12.2" fill="#a08ef1"/><rect x="24" y="12" width="12.2" height="12.2" fill="#9c88f0"/><rect x="36" y="12" width="12.2" height="12.2" fill="#a997f3"/><rect x="48" y="12" width="12.2" height="12.2" fill="#bcaff6"/><rect x="17" y="24" width="7.2" height="12.2" fill="#c2b7f7"/><rect x="24" y="24" width="12.2" height="12.2" fill="#bfb3f6"/><rect x="36" y="24" width="12.2" height="12.2" fill="#c6bcf8"/><rect x="48" y="24" width="12.2" height="12.2" fill="#b3a4f4"/><rect x="19" y="36" width="5.2" height="10" fill="#a999f3"/><rect x="24" y="36" width="12.2" height="10" fill="#9a86f0"/><rect x="36" y="36" width="12.2" height="10" fill="#a593f2"/><rect x="48" y="36" width="12.2" height="10" fill="#a08df1"/></svg>
<div class="ct" style="left:31px;top:112.3px">需求或者bug描述的部分描述框可以支持<br>视频上传，是否是markdown语言的描述<br>框架的局限导致不支持</div>
<div class="pill st" style="left:31px;top:308.0px;width:154.4px;background:#eec560;"><span class="t" style="left:32px">评审中</span></div>
<div class="pill" style="left:210.0px;top:308.0px;width:125px;background:#f5f5f5;color:#666;"><svg style="position:absolute;left:32px;top:12.5px;overflow:visible;" width="35" height="35" viewBox="0 0 35 35" fill="none"><g stroke="#999" stroke-width="2.3" stroke-linecap="butt"><path d="M9.8 20.7H4.8a2 2 0 0 1-2-2V8.6a2 2 0 0 1 2-2h14.7a2 2 0 0 1 2 2v10.1a2 2 0 0 1-2 2h-2.7" /><path d="M18 15.4h-2.9a2 2 0 0 0-2 2v9.5a2 2 0 0 0 2 2h14.8a2 2 0 0 0 2-2v-9.5a2 2 0 0 0-2-2h-6.1" /></g></svg><span class="t" style="left:77px;">2</span></div>
</div></div></div>
<div style="position:absolute;left:784.3px;top:923.3px;width:755.5px;height:484.6px;overflow:hidden;"><div class="card" style="left:20px;top:20px;width:715.5px;height:444.6px;">
<div style="position:absolute;left:-1.3px;top:-0.3px;width:715.5px;height:444.6px;">
<div style="position:absolute;left:1.0px;top:0.0px;width:8.2px;height:441.20000000000005px;background:#f2a27a;border-radius:4.1px;"></div>
<svg style="position:absolute;left:31px;top:41px;" width="40" height="40" viewBox="0 0 40 40" fill="none"><rect width="40" height="40" rx="7" fill="#6ccffa"/><path d="M11.4 11a2 2 0 0 1 2-2h12.9a2 2 0 0 1 2 2v19.5L19.8 23.8 11.4 30.5z" fill="#fff"/></svg>
<div class="id" style="left:90.5px;top:38.2px"><span style="letter-spacing:-2.3px">YF-</span>268</div>
<svg style="position:absolute;left:623px;top:28px;" width="60" height="72" viewBox="0 0 60 72" fill="none"><rect x="12" y="0" width="12.200" height="12.200" fill="#ebe6fc"/><rect x="24" y="0" width="12.200" height="12.200" fill="#d6cdf9"/><rect x="36" y="0" width="12.200" height="12.200" fill="#ebe6fc"/><rect x="0" y="12" width="12.200" height="12.200" fill="#d6cdf9"/><rect x="12" y="12" width="12.200" height="12.200" fill="#9782f2"/><rect x="24" y="12" width="12.200" height="12.200" fill="#9782f2"/><rect x="36" y="12" width="12.200" height="12.200" fill="#9782f2"/><rect x="48" y="12" width="12.200" height="12.200" fill="#d6cdf9"/><rect x="0" y="24" width="12.200" height="12.200" fill="#b9abf6"/><rect x="12" y="24" width="12.200" height="12.200" fill="#b6a7f5"/><rect x="24" y="24" width="12.200" height="12.200" fill="#ad9cf4"/><rect x="36" y="24" width="12.200" height="12.200" fill="#c0b4f7"/><rect x="48" y="24" width="12.200" height="12.200" fill="#b9abf6"/><rect x="0" y="36" width="12.200" height="12.200" fill="#bcaff6"/><rect x="12" y="36" width="12.200" height="12.200" fill="#c0b4f7"/><rect x="24" y="36" width="12.200" height="12.200" fill="#b09ff4"/><rect x="36" y="36" width="12.200" height="12.200" fill="#beb1f6"/><rect x="48" y="36" width="12.200" height="12.200" fill="#ac9bf4"/><rect x="0" y="48" width="12.200" height="12.200" fill="#d2c9f9"/><rect x="12" y="48" width="12.200" height="12.200" fill="#a18ef2"/><rect x="24" y="48" width="12.200" height="12.200" fill="#9782f2"/><rect x="36" y="48" width="12.200" height="12.200" fill="#a491f2"/><rect x="48" y="48" width="12.200" height="12.200" fill="#c8bdf8"/><rect x="12" y="60" width="12.200" height="12.200" fill="#dbd4fa"/><rect x="24" y="60" width="12.200" height="12.200" fill="#c3b8f7"/><rect x="36" y="60" width="12.200" height="12.200" fill="#dbd4fa"/></svg>
<div class="ct" style="left:31px;top:112.3px"># 消息提醒能够支持邮箱提醒选项</div>
<div class="pill st" style="left:31px;top:186.0px;width:154.4px;background:#eec560;"><span class="t" style="left:32px">评审中</span></div>
<div class="pill" style="left:210.0px;top:186.0px;width:153.3px;background:#f5f5f5;color:#666;"><svg style="position:absolute;left:32px;top:12.5px;overflow:visible;" width="35" height="35" viewBox="0 0 35 35" fill="none"><g stroke="#999" stroke-width="2.3"><path d="M3.6 2.8v23.5a3.2 3.2 0 0 0 3.2 3.2H21" /><path d="M3.6 9.5H21" /><rect x="22.2" y="4.2" width="9.3" height="9.6" rx="1.2" /><rect x="22.2" y="22.2" width="9.3" height="9.6" rx="1.2" /></g></svg><span class="t" style="left:77px;letter-spacing:0.8px;">0/2</span></div>
<div class="pill" style="left:31px;top:266.0px;width:296px;background:#f5f5f5;color:#666;"><svg style="position:absolute;left:32px;top:12.5px;overflow:visible;" width="35" height="36" viewBox="0 0 35 36" fill="none"><g stroke="#999" stroke-width="2.3"><rect x="1.2" y="7.4" width="32.4" height="26.7" rx="1.6" /><path d="M8.9 1.7v9.8M25.9 1.7v9.8" /><path d="M1.2 16.3h32.4" /></g></svg><span class="t" style="left:77px;letter-spacing:-0.45px;">2023年8月1日</span></div>
<div class="pill" style="left:352px;top:266.0px;width:296px;background:#fdefee;color:#ee7b72;"><svg style="position:absolute;left:32px;top:12.5px;overflow:visible;" width="35" height="36" viewBox="0 0 35 36" fill="none"><g stroke="#ee7b72" stroke-width="2.3"><rect x="1.2" y="7.4" width="32.4" height="26.7" rx="1.6" /><path d="M8.9 1.7v9.8M25.9 1.7v9.8" /><path d="M9.5 21.5l5.8 5.6 10.6-11.3" /></g></svg><span class="t" style="left:77px;letter-spacing:-0.45px;">2023年8月4日</span></div>
<div class="pill" style="left:31px;top:346.0px;width:124.8px;background:#f5f5f5;color:#666;"><svg style="position:absolute;left:32px;top:12.5px;overflow:visible;" width="35" height="35" viewBox="0 0 35 35" fill="none"><g stroke="#999" stroke-width="2.3" stroke-linejoin="round"><path d="M16.0 7.2A11 11 0 1 1 8.6 12.6" /><path d="M19.2 3.2l-4.4 4.1 4.6 3.9" /><path d="M0.4 29h33.2" /><path d="M29.6 24.4l4.6 4.6-4.6 4.6" /></g></svg><span class="t" style="left:77px;">4</span></div>
<div class="pill" style="left:180.8px;top:346.0px;width:124.8px;background:#f5f5f5;color:#666;"><svg style="position:absolute;left:32px;top:12.5px;overflow:visible;" width="35" height="35" viewBox="0 0 35 35" fill="none"><g stroke="#999" stroke-width="2.3" stroke-linecap="butt"><path d="M9.8 20.7H4.8a2 2 0 0 1-2-2V8.6a2 2 0 0 1 2-2h14.7a2 2 0 0 1 2 2v10.1a2 2 0 0 1-2 2h-2.7" /><path d="M18 15.4h-2.9a2 2 0 0 0-2 2v9.5a2 2 0 0 0 2 2h14.8a2 2 0 0 0 2-2v-9.5a2 2 0 0 0-2-2h-6.1" /></g></svg><span class="t" style="left:77px;">2</span></div>
<div class="pill" style="left:330.6px;top:346.0px;width:126px;background:#f5f5f5;color:#666;"><svg style="position:absolute;left:32px;top:12.5px;overflow:visible;" width="35" height="35" viewBox="0 0 35 35" fill="none"><g stroke="#999" stroke-width="2.4"><path d="M8 5.2h18.8" stroke-width="3" /><path d="M12.6 6v8.2L3.6 29.4a2.6 2.6 0 0 0 2.3 3.8h23a2.6 2.6 0 0 0 2.3-3.8L22.2 14.2V6" stroke-linejoin="round"/><path d="M7.2 24.6c3.6-2.2 6.8-1.6 10.2 0s6.4 1.6 10.2-0.6" /></g></svg><span class="t" style="left:79px;">1</span></div>
</div></div></div>
<div style="position:absolute;left:784.3px;top:1388.1px;width:755.5px;height:385.6px;overflow:hidden;"><div class="card" style="left:20px;top:20px;width:715.5px;height:345.6px;">
<div style="position:absolute;left:-1.3px;top:-0.3px;width:715.5px;height:345.6px;">
<svg style="position:absolute;left:31px;top:41px;" width="40" height="40" viewBox="0 0 40 40" fill="none"><rect width="40" height="40" rx="7" fill="#6ccffa"/><path d="M11.4 11a2 2 0 0 1 2-2h12.9a2 2 0 0 1 2 2v19.5L19.8 23.8 11.4 30.5z" fill="#fff"/></svg>
<div class="id" style="left:90.5px;top:38.2px"><span style="letter-spacing:-2.3px">YF-</span>264</div>
<svg style="position:absolute;left:623px;top:28px;" width="60" height="72" viewBox="0 0 60 72" fill="none"><rect x="12" y="0" width="12.200" height="12.200" fill="#ebe6fc"/><rect x="24" y="0" width="12.200" height="12.200" fill="#d6cdf9"/><rect x="36" y="0" width="12.200" height="12.200" fill="#ebe6fc"/><rect x="0" y="12" width="12.200" height="12.200" fill="#d6cdf9"/><rect x="12" y="12" width="12.200" height="12.200" fill="#9782f2"/><rect x="24" y="12" width="12.200" height="12.200" fill="#9782f2"/><rect x="36" y="12" width="12.200" height="12.200" fill="#9782f2"/><rect x="48" y="12" width="12.200" height="12.200" fill="#d6cdf9"/><rect x="0" y="24" width="12.200" height="12.200" fill="#b9abf6"/><rect x="12" y="24" width="12.200" height="12.200" fill="#b6a7f5"/><rect x="24" y="24" width="12.200" height="12.200" fill="#ad9cf4"/><rect x="36" y="24" width="12.200" height="12.200" fill="#c0b4f7"/><rect x="48" y="24" width="12.200" height="12.200" fill="#b9abf6"/><rect x="0" y="36" width="12.200" height="12.200" fill="#bcaff6"/><rect x="12" y="36" width="12.200" height="12.200" fill="#c0b4f7"/><rect x="24" y="36" width="12.200" height="12.200" fill="#b09ff4"/><rect x="36" y="36" width="12.200" height="12.200" fill="#beb1f6"/><rect x="48" y="36" width="12.200" height="12.200" fill="#ac9bf4"/><rect x="0" y="48" width="12.200" height="12.200" fill="#d2c9f9"/><rect x="12" y="48" width="12.200" height="12.200" fill="#a18ef2"/><rect x="24" y="48" width="12.200" height="12.200" fill="#9782f2"/><rect x="36" y="48" width="12.200" height="12.200" fill="#a491f2"/><rect x="48" y="48" width="12.200" height="12.200" fill="#c8bdf8"/><rect x="12" y="60" width="12.200" height="12.200" fill="#dbd4fa"/><rect x="24" y="60" width="12.200" height="12.200" fill="#c3b8f7"/><rect x="36" y="60" width="12.200" height="12.200" fill="#dbd4fa"/></svg>
<div class="ct" style="left:31px;top:112.3px">全局选择关联的弹窗中，是否单独置顶或<br>在某处集中展示当前已选中的工作项</div>
<div class="pill st" style="left:31px;top:247.0px;width:154.4px;background:#eec560;"><span class="t" style="left:32px">评审中</span></div>
<div class="pill" style="left:210.0px;top:247.0px;width:125px;background:#f5f5f5;color:#666;"><svg style="position:absolute;left:32px;top:12.5px;overflow:visible;" width="35" height="35" viewBox="0 0 35 35" fill="none"><g stroke="#999" stroke-width="2.3" stroke-linecap="butt"><path d="M9.8 20.7H4.8a2 2 0 0 1-2-2V8.6a2 2 0 0 1 2-2h14.7a2 2 0 0 1 2 2v10.1a2 2 0 0 1-2 2h-2.7" /><path d="M18 15.4h-2.9a2 2 0 0 0-2 2v9.5a2 2 0 0 0 2 2h14.8a2 2 0 0 0 2-2v-9.5a2 2 0 0 0-2-2h-6.1" /></g></svg><span class="t" style="left:77px;">2</span></div>
</div></div></div>
<div style="position:absolute;left:784.3px;top:1753.8999999999999px;width:755.5px;height:138.1px;overflow:hidden;"><div class="card" style="left:20px;top:20px;width:715.5px;height:284.6px;">
<div style="position:absolute;left:-1.3px;top:-0.3px;width:715.5px;height:284.6px;">
<svg style="position:absolute;left:31px;top:41px;" width="40" height="40" viewBox="0 0 40 40" fill="none"><rect width="40" height="40" rx="7" fill="#6ccffa"/><path d="M11.4 11a2 2 0 0 1 2-2h12.9a2 2 0 0 1 2 2v19.5L19.8 23.8 11.4 30.5z" fill="#fff"/></svg>
<div class="id" style="left:90.5px;top:38.2px"><span style="letter-spacing:-2.3px">YF-</span>265</div>
<svg style="position:absolute;left:623px;top:28px;" width="60" height="72" viewBox="0 0 60 72" fill="none"><rect x="12" y="0" width="12.200" height="12.200" fill="#ebe6fc"/><rect x="24" y="0" width="12.200" height="12.200" fill="#d6cdf9"/><rect x="36" y="0" width="12.200" height="12.200" fill="#ebe6fc"/><rect x="0" y="12" width="12.200" height="12.200" fill="#d6cdf9"/><rect x="12" y="12" width="12.200" height="12.200" fill="#9782f2"/><rect x="24" y="12" width="12.200" height="12.200" fill="#9782f2"/><rect x="36" y="12" width="12.200" height="12.200" fill="#9782f2"/><rect x="48" y="12" width="12.200" height="12.200" fill="#d6cdf9"/><rect x="0" y="24" width="12.200" height="12.200" fill="#b9abf6"/><rect x="12" y="24" width="12.200" height="12.200" fill="#b6a7f5"/><rect x="24" y="24" width="12.200" height="12.200" fill="#ad9cf4"/><rect x="36" y="24" width="12.200" height="12.200" fill="#c0b4f7"/><rect x="48" y="24" width="12.200" height="12.200" fill="#b9abf6"/><rect x="0" y="36" width="12.200" height="12.200" fill="#bcaff6"/><rect x="12" y="36" width="12.200" height="12.200" fill="#c0b4f7"/><rect x="24" y="36" width="12.200" height="12.200" fill="#b09ff4"/><rect x="36" y="36" width="12.200" height="12.200" fill="#beb1f6"/><rect x="48" y="36" width="12.200" height="12.200" fill="#ac9bf4"/><rect x="0" y="48" width="12.200" height="12.200" fill="#d2c9f9"/><rect x="12" y="48" width="12.200" height="12.200" fill="#a18ef2"/><rect x="24" y="48" width="12.200" height="12.200" fill="#9782f2"/><rect x="36" y="48" width="12.200" height="12.200" fill="#a491f2"/><rect x="48" y="48" width="12.200" height="12.200" fill="#c8bdf8"/><rect x="12" y="60" width="12.200" height="12.200" fill="#dbd4fa"/><rect x="24" y="60" width="12.200" height="12.200" fill="#c3b8f7"/><rect x="36" y="60" width="12.200" height="12.200" fill="#dbd4fa"/></svg>
<div class="ct" style="left:31px;top:112.3px">工作项列表支持按照负责人进行分组展示</div>
<div class="pill st" style="left:31px;top:186.0px;width:154.4px;background:#eec560;"><span class="t" style="left:32px">评审中</span></div>
<div class="pill" style="left:210.0px;top:186.0px;width:125px;background:#f5f5f5;color:#666;"><svg style="position:absolute;left:32px;top:12.5px;overflow:visible;" width="35" height="35" viewBox="0 0 35 35" fill="none"><g stroke="#999" stroke-width="2.3" stroke-linecap="butt"><path d="M9.8 20.7H4.8a2 2 0 0 1-2-2V8.6a2 2 0 0 1 2-2h14.7a2 2 0 0 1 2 2v10.1a2 2 0 0 1-2 2h-2.7" /><path d="M18 15.4h-2.9a2 2 0 0 0-2 2v9.5a2 2 0 0 0 2 2h14.8a2 2 0 0 0 2-2v-9.5a2 2 0 0 0-2-2h-6.1" /></g></svg><span class="t" style="left:77px;">2</span></div>
</div></div></div>
<div style="position:absolute;left:1584.3px;top:496.5px;width:755.5px;height:324.6px;overflow:hidden;"><div class="card" style="left:20px;top:20px;width:715.5px;height:284.6px;">
<div style="position:absolute;left:-1.3px;top:-0.3px;width:715.5px;height:284.6px;">
<svg style="position:absolute;left:31px;top:41px;" width="40" height="40" viewBox="0 0 40 40" fill="none"><rect width="40" height="40" rx="7" fill="#6ccffa"/><path d="M11.4 11a2 2 0 0 1 2-2h12.9a2 2 0 0 1 2 2v19.5L19.8 23.8 11.4 30.5z" fill="#fff"/></svg>
<div class="id" style="left:90.5px;top:38.2px"><span style="letter-spacing:-2.3px">YF-</span>269</div>
<div style="position:absolute;left:623px;top:34px;width:60px;height:60px;border-radius:50%;background:#6cabf8;color:#fff;font-size:27px;line-height:60px;text-align:center;letter-spacing:0px;white-space:nowrap;overflow:hidden;"><span style="position:relative;top:1.5px">萍萍</span></div>
<div class="ct" style="left:31px;top:112.3px">testhub支持我的测试计划展示</div>
<div class="pill st" style="left:31px;top:186.0px;width:154.4px;background:#eec560;"><span class="t" style="left:32px">评审中</span></div>
<div class="pill" style="left:210.0px;top:186.0px;width:125px;background:#f5f5f5;color:#666;"><svg style="position:absolute;left:32px;top:12.5px;overflow:visible;" width="35" height="35" viewBox="0 0 35 35" fill="none"><g stroke="#999" stroke-width="2.3" stroke-linecap="butt"><path d="M9.8 20.7H4.8a2 2 0 0 1-2-2V8.6a2 2 0 0 1 2-2h14.7a2 2 0 0 1 2 2v10.1a2 2 0 0 1-2 2h-2.7" /><path d="M18 15.4h-2.9a2 2 0 0 0-2 2v9.5a2 2 0 0 0 2 2h14.8a2 2 0 0 0 2-2v-9.5a2 2 0 0 0-2-2h-6.1" /></g></svg><span class="t" style="left:77px;">2</span></div>
</div></div></div>
<div style="position:absolute;left:1584.3px;top:801.3px;width:755.5px;height:385.6px;overflow:hidden;"><div class="card" style="left:20px;top:20px;width:715.5px;height:345.6px;">
<div style="position:absolute;left:-1.3px;top:-0.3px;width:715.5px;height:345.6px;">
<svg style="position:absolute;left:31px;top:41px;" width="40" height="40" viewBox="0 0 40 40" fill="none"><rect width="40" height="40" rx="7" fill="#6ccffa"/><path d="M11.4 11a2 2 0 0 1 2-2h12.9a2 2 0 0 1 2 2v19.5L19.8 23.8 11.4 30.5z" fill="#fff"/></svg>
<div class="id" style="left:90.5px;top:38.2px"><span style="letter-spacing:-2.3px">YF-</span>206</div>
<div style="position:absolute;left:623px;top:34px;width:60px;height:60px;border-radius:50%;background:#6cabf8;color:#fff;font-size:27px;line-height:60px;text-align:center;letter-spacing:0px;white-space:nowrap;overflow:hidden;"><span style="position:relative;top:1.5px">萍萍</span></div>
<div class="ct" style="left:31px;top:112.3px">人员从组织架构移动到另一个部门，原部<br>门和新部门的人数都没有更新</div>
<div class="pill st" style="left:31px;top:247.0px;width:154.4px;background:#eec560;"><span class="t" style="left:32px">评审中</span></div>
<div class="pill" style="left:210.0px;top:247.0px;width:125px;background:#f5f5f5;color:#666;"><svg style="position:absolute;left:32px;top:12.5px;overflow:visible;" width="35" height="35" viewBox="0 0 35 35" fill="none"><g stroke="#999" stroke-width="2.3" stroke-linecap="butt"><path d="M9.8 20.7H4.8a2 2 0 0 1-2-2V8.6a2 2 0 0 1 2-2h14.7a2 2 0 0 1 2 2v10.1a2 2 0 0 1-2 2h-2.7" /><path d="M18 15.4h-2.9a2 2 0 0 0-2 2v9.5a2 2 0 0 0 2 2h14.8a2 2 0 0 0 2-2v-9.5a2 2 0 0 0-2-2h-6.1" /></g></svg><span class="t" style="left:77px;">2</span></div>
</div></div></div>
<div style="position:absolute;left:1584.3px;top:1167.1px;width:755.5px;height:385.6px;overflow:hidden;"><div class="card" style="left:20px;top:20px;width:715.5px;height:345.6px;">
<div style="position:absolute;left:-1.3px;top:-0.3px;width:715.5px;height:345.6px;">
<svg style="position:absolute;left:31px;top:41px;" width="40" height="40" viewBox="0 0 40 40" fill="none"><rect width="40" height="40" rx="7" fill="#6ccffa"/><path d="M11.4 11a2 2 0 0 1 2-2h12.9a2 2 0 0 1 2 2v19.5L19.8 23.8 11.4 30.5z" fill="#fff"/></svg>
<div class="id" style="left:90.5px;top:38.2px"><span style="letter-spacing:-2.3px">YF-</span>211</div>
<div style="position:absolute;left:623px;top:34px;width:60px;height:60px;border-radius:50%;background:#6cabf8;color:#fff;font-size:27px;line-height:60px;text-align:center;letter-spacing:0px;white-space:nowrap;overflow:hidden;"><span style="position:relative;top:1.5px">萍萍</span></div>
<div class="ct" style="left:31px;top:112.3px">共享出去后的链接地址，打开图片预览太<br>大了，顶部会遮挡住图片的一部分</div>
<div class="pill st" style="left:31px;top:247.0px;width:154.4px;background:#eec560;"><span class="t" style="left:32px">评审中</span></div>
<div class="pill" style="left:210.0px;top:247.0px;width:125px;background:#f5f5f5;color:#666;"><svg style="position:absolute;left:32px;top:12.5px;overflow:visible;" width="35" height="35" viewBox="0 0 35 35" fill="none"><g stroke="#999" stroke-width="2.3" stroke-linecap="butt"><path d="M9.8 20.7H4.8a2 2 0 0 1-2-2V8.6a2 2 0 0 1 2-2h14.7a2 2 0 0 1 2 2v10.1a2 2 0 0 1-2 2h-2.7" /><path d="M18 15.4h-2.9a2 2 0 0 0-2 2v9.5a2 2 0 0 0 2 2h14.8a2 2 0 0 0 2-2v-9.5a2 2 0 0 0-2-2h-6.1" /></g></svg><span class="t" style="left:77px;">2</span></div>
</div></div></div>
<div style="position:absolute;left:1584.3px;top:1532.8999999999999px;width:755.5px;height:359.1px;overflow:hidden;"><div class="card" style="left:20px;top:20px;width:715.5px;height:345.6px;">
<div style="position:absolute;left:-1.3px;top:-0.3px;width:715.5px;height:345.6px;">
<svg style="position:absolute;left:31px;top:41px;" width="40" height="40" viewBox="0 0 40 40" fill="none"><rect width="40" height="40" rx="7" fill="#6ccffa"/><path d="M11.4 11a2 2 0 0 1 2-2h12.9a2 2 0 0 1 2 2v19.5L19.8 23.8 11.4 30.5z" fill="#fff"/></svg>
<div class="id" style="left:90.5px;top:38.2px"><span style="letter-spacing:-2.3px">YF-</span>207</div>
<div style="position:absolute;left:623px;top:34px;width:60px;height:60px;border-radius:50%;background:#6cabf8;color:#fff;font-size:27px;line-height:60px;text-align:center;letter-spacing:0px;white-space:nowrap;overflow:hidden;"><span style="position:relative;top:1.5px">萍萍</span></div>
<div class="ct" style="left:31px;top:112.3px">用户个人账户资料中，无法显示部门、职<br>位</div>
<div class="pill st" style="left:31px;top:247.0px;width:154.4px;background:#eec560;"><span class="t" style="left:32px">评审中</span></div>
<div class="pill" style="left:210.0px;top:247.0px;width:125px;background:#f5f5f5;color:#666;"><svg style="position:absolute;left:32px;top:12.5px;overflow:visible;" width="35" height="35" viewBox="0 0 35 35" fill="none"><g stroke="#999" stroke-width="2.3" stroke-linecap="butt"><path d="M9.8 20.7H4.8a2 2 0 0 1-2-2V8.6a2 2 0 0 1 2-2h14.7a2 2 0 0 1 2 2v10.1a2 2 0 0 1-2 2h-2.7" /><path d="M18 15.4h-2.9a2 2 0 0 0-2 2v9.5a2 2 0 0 0 2 2h14.8a2 2 0 0 0 2-2v-9.5a2 2 0 0 0-2-2h-6.1" /></g></svg><span class="t" style="left:77px;">2</span></div>
</div></div></div>
<div style="position:absolute;left:2403px;top:511.0px;font-size:35px;line-height:56.0px;color:#999;white-space:nowrap;">进行中</div>
<div style="position:absolute;left:2384.3px;top:561.5px;width:755.5px;height:446.6px;overflow:hidden;"><div class="card" style="left:20px;top:20px;width:715.5px;height:406.6px;">
<div style="position:absolute;left:-1.3px;top:-0.3px;width:715.5px;height:406.6px;">
<svg style="position:absolute;left:31px;top:41px;" width="40" height="40" viewBox="0 0 40 40" fill="none"><rect width="40" height="40" rx="7" fill="#6ccffa"/><path d="M11.4 11a2 2 0 0 1 2-2h12.9a2 2 0 0 1 2 2v19.5L19.8 23.8 11.4 30.5z" fill="#fff"/></svg>
<div class="id" style="left:90.5px;top:38.2px"><span style="letter-spacing:-2.3px">YF-</span>260</div>
<svg style="position:absolute;left:623px;top:34px;" width="60" height="60" viewBox="0 0 60 60" fill="none"><defs><clipPath id="b1"><circle cx="30" cy="30" r="30"/></clipPath></defs><g clip-path="url(#b1)"><rect width="60" height="60" fill="#3f5a9f"/><path d="M0 18c8-4 14-6 22-5l-4 6c-6 0-12 2-18 6z" fill="#5f7ab5"/><path d="M0 28c5-2 9-2 13-1l-1 5c-4 0-8 1-12 3z" fill="#6f86b8"/><path d="M30 36c6-8 12-10 18-6l12 6v24H30z" fill="#38509a"/><path d="M0 36h22v8H0z" fill="#4a63a3"/><circle cx="36.500" cy="5.800" r="4.800" fill="#e892a6" opacity=".85"/><circle cx="37" cy="6" r="2.300" fill="#fbe3bc"/><path d="M14 9l16-3M31 11l-7 7M40 9l10 10" stroke="#d9a58f" stroke-width=".800"/><path d="M3 47c5-6 13-9 19-10l8 1c7 1 15 5 21 11l-6 11H8z" fill="#b3c0da"/><path d="M20 37l5 15 8-14z" fill="#ecd7cf"/><path d="M18 39l7 14M34 38l-6 10" stroke="#d9def0" stroke-width="1.500"/><ellipse cx="25.800" cy="26" rx="8.300" ry="11.600" fill="#eedad3"/><path d="M16.600 26.500C14.500 15 20.500 10.600 26 10.700c6.500-.100 10.600 5.300 8.300 15.800l-1.300-7c-4 0-8.500-1.600-11-4-2 2.600-3.600 4.200-4.600 5.400z" fill="#2a2229"/><circle cx="21.600" cy="24.200" r="1.050" fill="#222"/><circle cx="28.700" cy="24.200" r="1.050" fill="#222"/><circle cx="19.600" cy="28" r="1.500" fill="#e8955a"/><circle cx="31.100" cy="28" r="1.500" fill="#e8955a"/><circle cx="25.200" cy="27.700" r="1.300" fill="#e89a2b"/><path d="M49 22l4-1 5 3 1.500 6-1.500 11h-6l-1-9z" fill="#ecd3c6"/><path d="M50 41h8l1 10-7 1z" fill="#a9b8d6"/></g></svg>
<div class="ct" style="left:31px;top:112.3px">建议飞书版<span style="letter-spacing:-0.6px">agile</span>，考虑做用量提醒弹窗或<br>推送，体验版用户隔两周提醒管理员新项<br>目和工作项的使用情况</div>
<div class="pill st" style="left:31px;top:308.0px;width:124.4px;background:#72dcc0;"><span class="t" style="left:32px">设计</span></div>
<div class="pill" style="left:180.0px;top:308.0px;width:125px;background:#f5f5f5;color:#666;"><svg style="position:absolute;left:32px;top:12.5px;overflow:visible;" width="35" height="35" viewBox="0 0 35 35" fill="none"><g stroke="#999" stroke-width="2.3" stroke-linecap="butt"><path d="M9.8 20.7H4.8a2 2 0 0 1-2-2V8.6a2 2 0 0 1 2-2h14.7a2 2 0 0 1 2 2v10.1a2 2 0 0 1-2 2h-2.7" /><path d="M18 15.4h-2.9a2 2 0 0 0-2 2v9.5a2 2 0 0 0 2 2h14.8a2 2 0 0 0 2-2v-9.5a2 2 0 0 0-2-2h-6.1" /></g></svg><span class="t" style="left:77px;">2</span></div>
</div></div></div>
<div style="position:absolute;left:2384.3px;top:988.3px;width:755.5px;height:385.6px;overflow:hidden;"><div class="card" style="left:20px;top:20px;width:715.5px;height:345.6px;">
<div style="position:absolute;left:-1.3px;top:-0.3px;width:715.5px;height:345.6px;">
<svg style="position:absolute;left:31px;top:41px;" width="40" height="40" viewBox="0 0 40 40" fill="none"><rect width="40" height="40" rx="7" fill="#6ccffa"/><path d="M11.4 11a2 2 0 0 1 2-2h12.9a2 2 0 0 1 2 2v19.5L19.8 23.8 11.4 30.5z" fill="#fff"/></svg>
<div class="id" style="left:90.5px;top:38.2px"><span style="letter-spacing:-2.3px">YF-</span>262</div>
<svg style="position:absolute;left:623px;top:34px;" width="60" height="60" viewBox="0 0 60 60" fill="none"><defs><clipPath id="b2"><circle cx="30" cy="30" r="30"/></clipPath></defs><g clip-path="url(#b2)"><rect width="60" height="60" fill="#3f5a9f"/><path d="M0 18c8-4 14-6 22-5l-4 6c-6 0-12 2-18 6z" fill="#5f7ab5"/><path d="M0 28c5-2 9-2 13-1l-1 5c-4 0-8 1-12 3z" fill="#6f86b8"/><path d="M30 36c6-8 12-10 18-6l12 6v24H30z" fill="#38509a"/><path d="M0 36h22v8H0z" fill="#4a63a3"/><circle cx="36.500" cy="5.800" r="4.800" fill="#e892a6" opacity=".85"/><circle cx="37" cy="6" r="2.300" fill="#fbe3bc"/><path d="M14 9l16-3M31 11l-7 7M40 9l10 10" stroke="#d9a58f" stroke-width=".800"/><path d="M3 47c5-6 13-9 19-10l8 1c7 1 15 5 21 11l-6 11H8z" fill="#b3c0da"/><path d="M20 37l5 15 8-14z" fill="#ecd7cf"/><path d="M18 39l7 14M34 38l-6 10" stroke="#d9def0" stroke-width="1.500"/><ellipse cx="25.800" cy="26" rx="8.300" ry="11.600" fill="#eedad3"/><path d="M16.600 26.500C14.500 15 20.500 10.600 26 10.700c6.500-.100 10.600 5.300 8.300 15.800l-1.300-7c-4 0-8.500-1.600-11-4-2 2.600-3.600 4.200-4.600 5.400z" fill="#2a2229"/><circle cx="21.600" cy="24.200" r="1.050" fill="#222"/><circle cx="28.700" cy="24.200" r="1.050" fill="#222"/><circle cx="19.600" cy="28" r="1.500" fill="#e8955a"/><circle cx="31.100" cy="28" r="1.500" fill="#e8955a"/><circle cx="25.200" cy="27.700" r="1.300" fill="#e89a2b"/><path d="M49 22l4-1 5 3 1.500 6-1.500 11h-6l-1-9z" fill="#ecd3c6"/><path d="M50 41h8l1 10-7 1z" fill="#a9b8d6"/></g></svg>
<div class="ct" style="left:31px;top:112.3px"><span style="letter-spacing:-0.35px">1.整个表格的删除操作入口太深2.光标处于</span><br>表格后方时可使用<span style="letter-spacing:-0.4px">delete</span>键删除</div>
<div class="pill st" style="left:31px;top:247.0px;width:124.4px;background:#72dcc0;"><span class="t" style="left:32px">设计</span></div>
<div class="pill" style="left:180.0px;top:247.0px;width:125px;background:#f5f5f5;color:#666;"><svg style="position:absolute;left:32px;top:12.5px;overflow:visible;" width="35" height="35" viewBox="0 0 35 35" fill="none"><g stroke="#999" stroke-width="2.3" stroke-linecap="butt"><path d="M9.8 20.7H4.8a2 2 0 0 1-2-2V8.6a2 2 0 0 1 2-2h14.7a2 2 0 0 1 2 2v10.1a2 2 0 0 1-2 2h-2.7" /><path d="M18 15.4h-2.9a2 2 0 0 0-2 2v9.5a2 2 0 0 0 2 2h14.8a2 2 0 0 0 2-2v-9.5a2 2 0 0 0-2-2h-6.1" /></g></svg><span class="t" style="left:77px;">2</span></div>
</div></div></div>
<div style="position:absolute;left:2384.3px;top:1354.1px;width:755.5px;height:385.6px;overflow:hidden;"><div class="card" style="left:20px;top:20px;width:715.5px;height:345.6px;">
<div style="position:absolute;left:-1.3px;top:-0.3px;width:715.5px;height:345.6px;">
<svg style="position:absolute;left:31px;top:41px;" width="40" height="40" viewBox="0 0 40 40" fill="none"><rect width="40" height="40" rx="7" fill="#6ccffa"/><path d="M11.4 11a2 2 0 0 1 2-2h12.9a2 2 0 0 1 2 2v19.5L19.8 23.8 11.4 30.5z" fill="#fff"/></svg>
<div class="id" style="left:90.5px;top:38.2px"><span style="letter-spacing:-2.3px">YF-</span>220</div>
<svg style="position:absolute;left:623px;top:34px;" width="60" height="60" viewBox="0 0 60 60" fill="none"><defs><clipPath id="b3"><circle cx="30" cy="30" r="30"/></clipPath></defs><g clip-path="url(#b3)"><rect width="60" height="60" fill="#3f5a9f"/><path d="M0 18c8-4 14-6 22-5l-4 6c-6 0-12 2-18 6z" fill="#5f7ab5"/><path d="M0 28c5-2 9-2 13-1l-1 5c-4 0-8 1-12 3z" fill="#6f86b8"/><path d="M30 36c6-8 12-10 18-6l12 6v24H30z" fill="#38509a"/><path d="M0 36h22v8H0z" fill="#4a63a3"/><circle cx="36.500" cy="5.800" r="4.800" fill="#e892a6" opacity=".85"/><circle cx="37" cy="6" r="2.300" fill="#fbe3bc"/><path d="M14 9l16-3M31 11l-7 7M40 9l10 10" stroke="#d9a58f" stroke-width=".800"/><path d="M3 47c5-6 13-9 19-10l8 1c7 1 15 5 21 11l-6 11H8z" fill="#b3c0da"/><path d="M20 37l5 15 8-14z" fill="#ecd7cf"/><path d="M18 39l7 14M34 38l-6 10" stroke="#d9def0" stroke-width="1.500"/><ellipse cx="25.800" cy="26" rx="8.300" ry="11.600" fill="#eedad3"/><path d="M16.600 26.500C14.500 15 20.500 10.600 26 10.700c6.500-.100 10.600 5.300 8.300 15.800l-1.300-7c-4 0-8.500-1.600-11-4-2 2.600-3.600 4.200-4.600 5.400z" fill="#2a2229"/><circle cx="21.600" cy="24.200" r="1.050" fill="#222"/><circle cx="28.700" cy="24.200" r="1.050" fill="#222"/><circle cx="19.600" cy="28" r="1.500" fill="#e8955a"/><circle cx="31.100" cy="28" r="1.500" fill="#e8955a"/><circle cx="25.200" cy="27.700" r="1.300" fill="#e89a2b"/><path d="M49 22l4-1 5 3 1.500 6-1.500 11h-6l-1-9z" fill="#ecd3c6"/><path d="M50 41h8l1 10-7 1z" fill="#a9b8d6"/></g></svg>
<div class="ct" style="left:31px;top:112.3px"><span style="letter-spacing:-0.9px">Scrum</span>项目<span style="letter-spacing:1.8px">--</span>缺陷<span style="letter-spacing:1.8px">--</span>导出缺陷点击后展示空<br>白页，浏览器代码【<span style="letter-spacing:-0.5px">unsafe:javascript:;</span>】</div>
<div class="pill st" style="left:31px;top:247.0px;width:124.4px;background:#72dcc0;"><span class="t" style="left:32px">设计</span></div>
<div class="pill" style="left:180.0px;top:247.0px;width:125px;background:#f5f5f5;color:#666;"><svg style="position:absolute;left:32px;top:12.5px;overflow:visible;" width="35" height="35" viewBox="0 0 35 35" fill="none"><g stroke="#999" stroke-width="2.3" stroke-linecap="butt"><path d="M9.8 20.7H4.8a2 2 0 0 1-2-2V8.6a2 2 0 0 1 2-2h14.7a2 2 0 0 1 2 2v10.1a2 2 0 0 1-2 2h-2.7" /><path d="M18 15.4h-2.9a2 2 0 0 0-2 2v9.5a2 2 0 0 0 2 2h14.8a2 2 0 0 0 2-2v-9.5a2 2 0 0 0-2-2h-6.1" /></g></svg><span class="t" style="left:77px;">2</span></div>
</div></div></div>
<div style="position:absolute;left:2384.3px;top:1719.8999999999999px;width:755.5px;height:172.1px;overflow:hidden;"><div class="card" style="left:20px;top:20px;width:715.5px;height:345.6px;">
<div style="position:absolute;left:-1.3px;top:-0.3px;width:715.5px;height:345.6px;">
<svg style="position:absolute;left:31px;top:41px;" width="40" height="40" viewBox="0 0 40 40" fill="none"><rect width="40" height="40" rx="7" fill="#6ccffa"/><path d="M11.4 11a2 2 0 0 1 2-2h12.9a2 2 0 0 1 2 2v19.5L19.8 23.8 11.4 30.5z" fill="#fff"/></svg>
<div class="id" style="left:90.5px;top:38.2px"><span style="letter-spacing:-2.3px">YF-</span>225</div>
<svg style="position:absolute;left:623px;top:34px;" width="60" height="60" viewBox="0 0 60 60" fill="none"><defs><clipPath id="b4"><circle cx="30" cy="30" r="30"/></clipPath></defs><g clip-path="url(#b4)"><rect width="60" height="60" fill="#3f5a9f"/><path d="M0 18c8-4 14-6 22-5l-4 6c-6 0-12 2-18 6z" fill="#5f7ab5"/><path d="M0 28c5-2 9-2 13-1l-1 5c-4 0-8 1-12 3z" fill="#6f86b8"/><path d="M30 36c6-8 12-10 18-6l12 6v24H30z" fill="#38509a"/><path d="M0 36h22v8H0z" fill="#4a63a3"/><circle cx="36.500" cy="5.800" r="4.800" fill="#e892a6" opacity=".85"/><circle cx="37" cy="6" r="2.300" fill="#fbe3bc"/><path d="M14 9l16-3M31 11l-7 7M40 9l10 10" stroke="#d9a58f" stroke-width=".800"/><path d="M3 47c5-6 13-9 19-10l8 1c7 1 15 5 21 11l-6 11H8z" fill="#b3c0da"/><path d="M20 37l5 15 8-14z" fill="#ecd7cf"/><path d="M18 39l7 14M34 38l-6 10" stroke="#d9def0" stroke-width="1.500"/><ellipse cx="25.800" cy="26" rx="8.300" ry="11.600" fill="#eedad3"/><path d="M16.600 26.500C14.500 15 20.500 10.600 26 10.700c6.500-.100 10.600 5.300 8.300 15.800l-1.300-7c-4 0-8.500-1.600-11-4-2 2.600-3.600 4.200-4.600 5.400z" fill="#2a2229"/><circle cx="21.600" cy="24.200" r="1.050" fill="#222"/><circle cx="28.700" cy="24.200" r="1.050" fill="#222"/><circle cx="19.600" cy="28" r="1.500" fill="#e8955a"/><circle cx="31.100" cy="28" r="1.500" fill="#e8955a"/><circle cx="25.200" cy="27.700" r="1.300" fill="#e89a2b"/><path d="M49 22l4-1 5 3 1.500 6-1.500 11h-6l-1-9z" fill="#ecd3c6"/><path d="M50 41h8l1 10-7 1z" fill="#a9b8d6"/></g></svg>
<div class="ct" style="left:31px;top:112.3px">工作项里参与人的文案是【关注】，在视<br>图筛选里却叫做【参与人】，建议统一</div>
<div class="pill st" style="left:31px;top:247.0px;width:124.4px;background:#72dcc0;"><span class="t" style="left:32px">设计</span></div>
<div class="pill" style="left:180.0px;top:247.0px;width:125px;background:#f5f5f5;color:#666;"><svg style="position:absolute;left:32px;top:12.5px;overflow:visible;" width="35" height="35" viewBox="0 0 35 35" fill="none"><g stroke="#999" stroke-width="2.3" stroke-linecap="butt"><path d="M9.8 20.7H4.8a2 2 0 0 1-2-2V8.6a2 2 0 0 1 2-2h14.7a2 2 0 0 1 2 2v10.1a2 2 0 0 1-2 2h-2.7" /><path d="M18 15.4h-2.9a2 2 0 0 0-2 2v9.5a2 2 0 0 0 2 2h14.8a2 2 0 0 0 2-2v-9.5a2 2 0 0 0-2-2h-6.1" /></g></svg><span class="t" style="left:77px;">2</span></div>
</div></div></div>
<div style="position:absolute;left:3203px;top:511.0px;font-size:35px;line-height:56.0px;color:#999;white-space:nowrap;">已完成</div>
<div style="position:absolute;left:3184.3px;top:561.5px;width:755.5px;height:507.6px;overflow:hidden;"><div class="card" style="left:20px;top:20px;width:715.5px;height:467.6px;">
<div style="position:absolute;left:-1.3px;top:-0.3px;width:715.5px;height:467.6px;">
<svg style="position:absolute;left:31px;top:41px;" width="40" height="40" viewBox="0 0 40 40" fill="none"><rect width="40" height="40" rx="7" fill="#6ccffa"/><path d="M11.4 11a2 2 0 0 1 2-2h12.9a2 2 0 0 1 2 2v19.5L19.8 23.8 11.4 30.5z" fill="#fff"/></svg>
<div class="id" style="left:90.5px;top:38.2px"><span style="letter-spacing:-2.3px">YF-</span>259</div>
<div class="ct" style="left:31px;top:112.3px">看板的默认任务类型可以配置，现在只展<br>示史诗、特性和事务，新用户不知道该新<br>建什么，可以让用户自行选择，减少使用<br>时的挫败感</div>
<div class="pill st" style="left:31px;top:369.0px;width:124.4px;background:#72dcc0;"><span class="t" style="left:32px">设计</span></div>
<div class="pill" style="left:180.0px;top:369.0px;width:125px;background:#f5f5f5;color:#666;"><svg style="position:absolute;left:32px;top:12.5px;overflow:visible;" width="35" height="35" viewBox="0 0 35 35" fill="none"><g stroke="#999" stroke-width="2.3" stroke-linecap="butt"><path d="M9.8 20.7H4.8a2 2 0 0 1-2-2V8.6a2 2 0 0 1 2-2h14.7a2 2 0 0 1 2 2v10.1a2 2 0 0 1-2 2h-2.7" /><path d="M18 15.4h-2.9a2 2 0 0 0-2 2v9.5a2 2 0 0 0 2 2h14.8a2 2 0 0 0 2-2v-9.5a2 2 0 0 0-2-2h-6.1" /></g></svg><span class="t" style="left:77px;">2</span></div>
</div></div></div>
<div style="position:absolute;left:3184.3px;top:1049.3px;width:755.5px;height:324.6px;overflow:hidden;"><div class="card" style="left:20px;top:20px;width:715.5px;height:284.6px;">
<div style="position:absolute;left:-1.3px;top:-0.3px;width:715.5px;height:284.6px;">
<svg style="position:absolute;left:31px;top:41px;" width="40" height="40" viewBox="0 0 40 40" fill="none"><rect width="40" height="40" rx="7" fill="#6ccffa"/><path d="M11.4 11a2 2 0 0 1 2-2h12.9a2 2 0 0 1 2 2v19.5L19.8 23.8 11.4 30.5z" fill="#fff"/></svg>
<div class="id" style="left:90.5px;top:38.2px"><span style="letter-spacing:-2.3px">YF-</span>256</div>
<div class="ct" style="left:31px;top:112.3px">用例库的字段类型可以支持自定义配置</div>
<div class="pill st" style="left:31px;top:186.0px;width:124.4px;background:#72dcc0;"><span class="t" style="left:32px">设计</span></div>
<div class="pill" style="left:180.0px;top:186.0px;width:125px;background:#f5f5f5;color:#666;"><svg style="position:absolute;left:32px;top:12.5px;overflow:visible;" width="35" height="35" viewBox="0 0 35 35" fill="none"><g stroke="#999" stroke-width="2.3" stroke-linecap="butt"><path d="M9.8 20.7H4.8a2 2 0 0 1-2-2V8.6a2 2 0 0 1 2-2h14.7a2 2 0 0 1 2 2v10.1a2 2 0 0 1-2 2h-2.7" /><path d="M18 15.4h-2.9a2 2 0 0 0-2 2v9.5a2 2 0 0 0 2 2h14.8a2 2 0 0 0 2-2v-9.5a2 2 0 0 0-2-2h-6.1" /></g></svg><span class="t" style="left:77px;">2</span></div>
</div></div></div>
<svg style="position:absolute;left:3206.4px;top:1394.7px;overflow:visible;" width="30" height="30" viewBox="0 0 30 30" fill="none"><path d="M15.0 0V30M0 15.0H30" stroke="#999" stroke-width="2.5"/></svg>
<div style="position:absolute;left:3249.4px;top:1384.0px;font-size:35px;line-height:56.0px;color:#999;white-space:nowrap;">新建工作项</div>
<div style="position:absolute;left:0px;top:1892px;width:3183px;height:70px;background:#fafafa;"></div>
<svg style="position:absolute;left:6.4px;top:1933.0px;overflow:visible;" width="30" height="30" viewBox="0 0 30 30" fill="none"><path d="M15.0 0V30M0 15.0H30" stroke="#999" stroke-width="2.5"/></svg>
<div style="position:absolute;left:49.4px;top:1922.3px;font-size:35px;line-height:56.0px;color:#999;white-space:nowrap;">新建工作项</div>
<svg style="position:absolute;left:807.4px;top:1933.0px;overflow:visible;" width="30" height="30" viewBox="0 0 30 30" fill="none"><path d="M15.0 0V30M0 15.0H30" stroke="#999" stroke-width="2.5"/></svg>
<div style="position:absolute;left:850.4px;top:1922.3px;font-size:35px;line-height:56.0px;color:#999;white-space:nowrap;">新建工作项</div>
<svg style="position:absolute;left:1607.4px;top:1933.0px;overflow:visible;" width="30" height="30" viewBox="0 0 30 30" fill="none"><path d="M15.0 0V30M0 15.0H30" stroke="#999" stroke-width="2.5"/></svg>
<div style="position:absolute;left:1650.4px;top:1922.3px;font-size:35px;line-height:56.0px;color:#999;white-space:nowrap;">新建工作项</div>
<svg style="position:absolute;left:2407.4px;top:1933.0px;overflow:visible;" width="30" height="30" viewBox="0 0 30 30" fill="none"><path d="M15.0 0V30M0 15.0H30" stroke="#999" stroke-width="2.5"/></svg>
<div style="position:absolute;left:2450.4px;top:1922.3px;font-size:35px;line-height:56.0px;color:#999;white-space:nowrap;">新建工作项</div>
<div style="position:absolute;left:740.5px;top:517.5px;width:42.5px;height:1438.5px;background:#f1f1f1;"></div>
<svg style="position:absolute;left:750.9px;top:533.0px;" width="21" height="11" viewBox="0 0 21 11" fill="none"><path d="M0 11L10.300 0 20.600 11z" fill="#a3a3a3"/></svg>
<div style="position:absolute;left:742.2px;top:559.0px;width:37.9px;height:464.0px;background:#c1c1c1;"></div>
<div style="position:absolute;left:1540.4px;top:517.5px;width:42.5px;height:1438.5px;background:#f1f1f1;"></div>
<svg style="position:absolute;left:1550.8000000000002px;top:533.0px;" width="21" height="11" viewBox="0 0 21 11" fill="none"><path d="M0 11L10.300 0 20.600 11z" fill="#a3a3a3"/></svg>
<div style="position:absolute;left:1542.1000000000001px;top:559.0px;width:37.9px;height:567.5999999999999px;background:#c1c1c1;"></div>
<div style="position:absolute;left:2340.4px;top:517.5px;width:42.5px;height:1438.5px;background:#f1f1f1;"></div>
<svg style="position:absolute;left:2350.8px;top:533.0px;" width="21" height="11" viewBox="0 0 21 11" fill="none"><path d="M0 11L10.300 0 20.600 11z" fill="#a3a3a3"/></svg>
<div style="position:absolute;left:2342.1px;top:559.0px;width:37.9px;height:529.0px;background:#c1c1c1;"></div>
<div style="position:absolute;left:3140.4px;top:517.5px;width:42.5px;height:1438.5px;background:#f1f1f1;"></div>
<svg style="position:absolute;left:3150.8px;top:533.0px;" width="21" height="11" viewBox="0 0 21 11" fill="none"><path d="M0 11L10.300 0 20.600 11z" fill="#a3a3a3"/></svg>
<div style="position:absolute;left:3142.1px;top:559.0px;width:37.9px;height:842.0px;background:#c1c1c1;"></div>
<div style="position:absolute;left:782.3px;top:364.5px;width:1.9px;height:1600px;background:#eeeeee;"></div>
<div style="position:absolute;left:1582.3px;top:364.5px;width:1.9px;height:1600px;background:#eeeeee;"></div>
<div style="position:absolute;left:2382.3px;top:364.5px;width:1.9px;height:1600px;background:#eeeeee;"></div>
<div style="position:absolute;left:3182.3px;top:486.5px;width:0px;height:1500px;border-left:1.6px dashed #dcdcdc;"></div>
</div>
</body></html>
